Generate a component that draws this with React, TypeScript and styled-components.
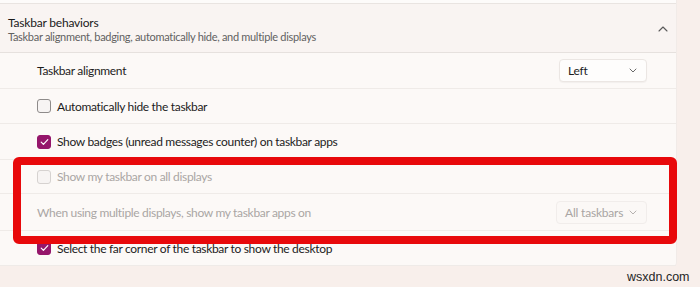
import styled, { createGlobalStyle } from "styled-components";

const GlobalStyle = createGlobalStyle`
  body {
    margin: 0;
    background: #f8efeb;
    font-family: Lato, "Noto Sans", sans-serif;
  }
`;

const ChevronDown = () => (
  <svg width="8" height="5" viewBox="0 0 8 5">
    <path d="M1 1l3 3 3-3" fill="none" stroke="currentColor" strokeWidth="1" strokeLinecap="round" strokeLinejoin="round" />
  </svg>
);

const ChevronUp = () => (
  <svg width="10" height="6" viewBox="0 0 10 6">
    <path d="M1 5l4-4 4 4" fill="none" stroke="currentColor" strokeWidth="1.1" strokeLinecap="round" strokeLinejoin="round" />
  </svg>
);

const CheckMark = () => (
  <svg width="9" height="8" viewBox="0 0 9 8">
    <path d="M1.2 4.2l2.2 2.2L7.8 1.6" fill="none" stroke="white" strokeWidth="1.2" strokeLinecap="round" strokeLinejoin="round" />
  </svg>
);

type Row = {
  label: string;
  h: number;
  check?: "on" | "off";
  disabled?: boolean;
  select?: string;
};

const rows: Row[] = [
  { label: "Taskbar alignment", h: 35, select: "Left" },
  { label: "Automatically hide the taskbar", h: 34, check: "off" },
  { label: "Show badges (unread messages counter) on taskbar apps", h: 35, check: "on" },
  { label: "Show my taskbar on all displays", h: 33, check: "off", disabled: true },
  { label: "When using multiple displays, show my taskbar apps on", h: 36, disabled: true, select: "All taskbars" },
  { label: "Select the far corner of the taskbar to show the desktop", h: 34, check: "on" },
];

export default function App() {
  return (
    <>
      <GlobalStyle />
      <Page>
        <Card>
          <PrevStrip />
          <Header>
            <HeaderText>
              <Title>Taskbar behaviors</Title>
              <Subtitle>Taskbar alignment, badging, automatically hide, and multiple displays</Subtitle>
            </HeaderText>
            <HeaderChevron>
              <ChevronUp />
            </HeaderChevron>
          </Header>
          {rows.map((r) => (
            <SettingRow key={r.label} $h={r.h}>
              <Label $disabled={r.disabled}>
                {r.check && (
                  <Box $checked={r.check === "on"} $disabled={r.disabled}>
                    {r.check === "on" && <CheckMark />}
                  </Box>
                )}
                {r.label}
              </Label>
              {r.select && (
                <Select $disabled={r.disabled} $w={r.select === "Left" ? 88 : 91}>
                  <span>{r.select}</span>
                  <ChevronDown />
                </Select>
              )}
            </SettingRow>
          ))}
        </Card>
        <Highlight />
        <Watermark>wsxdn.com</Watermark>
      </Page>
    </>
  );
}

const Page = styled.div`
  position: relative;
  width: 700px;
  height: 287px;
  overflow: hidden;
  background: #f8efeb;
`;

const Card = styled.div`
  width: 677px;
  background: #fcf9f7;
  border-bottom-right-radius: 4px;
  border-right: 1px solid #f1ebe8;
  box-sizing: border-box;
`;

const PrevStrip = styled.div`
  height: 3px;
  background: #fdfbfa;
  border-bottom: 1px solid #e9e4e1;
`;

const Header = styled.div`
  display: flex;
  align-items: center;
  justify-content: space-between;
  height: 48px;
  padding: 0 8px 0 8px;
  background: #f9f4f2;
  border-bottom: 1px solid #e6e1de;
`;

const HeaderText = styled.div`
  display: flex;
  flex-direction: column;
  margin-top: 3px;
`;

const Title = styled.div`
  font-size: 12px;
  letter-spacing: -0.2px;
  color: #1a1a1a;
  line-height: 14px;
`;

const Subtitle = styled.div`
  font-size: 11px;
  letter-spacing: -0.3px;
  color: #616161;
  line-height: 14px;
`;

const HeaderChevron = styled.div`
  display: flex;
  color: #5a5a5a;
  margin-top: 2px;
`;

const SettingRow = styled.div<{ $h: number }>`
  display: flex;
  align-items: center;
  justify-content: space-between;
  height: ${(p) => p.$h}px;
  padding: 0 29px 0 37px;
  border-bottom: 1px solid #efebe8;
`;

const Label = styled.div<{ $disabled?: boolean }>`
  display: flex;
  align-items: center;
  gap: 6px;
  font-size: 12px;
  letter-spacing: -0.32px;
  white-space: nowrap;
  color: ${(p) => (p.$disabled ? "#aaa6a4" : "#1c1c1c")};
`;

const Box = styled.div<{ $checked: boolean; $disabled?: boolean }>`
  display: flex;
  align-items: center;
  justify-content: center;
  width: 14px;
  height: 14px;
  box-sizing: border-box;
  border-radius: 3px;
  background: ${(p) => (p.$checked ? "#95166b" : "#f7f4f3")};
  border: 1px solid ${(p) => (p.$checked ? "#95166b" : p.$disabled ? "#d6d2d0" : "#8e8b8a")};
`;

const Select = styled.div<{ $disabled?: boolean; $w: number }>`
  display: flex;
  align-items: center;
  justify-content: space-between;
  width: ${(p) => p.$w}px;
  height: 23px;
  box-sizing: border-box;
  padding: 0 9px 0 8px;
  border-radius: 4px;
  font-size: 12px;
  letter-spacing: -0.2px;
  white-space: nowrap;
  background: ${(p) => (p.$disabled ? "#fbf8f6" : "#fefdfc")};
  border: 1px solid ${(p) => (p.$disabled ? "#f1edeb" : "#ebe6e3")};
  color: ${(p) => (p.$disabled ? "#a9a5a3" : "#1c1c1c")};
  box-shadow: ${(p) => (p.$disabled ? "none" : "0 1px 1px rgba(0,0,0,0.04)")};

  svg {
    color: ${(p) => (p.$disabled ? "#b5b1af" : "#6a6a6a")};
  }
`;

const Highlight = styled.div`
  position: absolute;
  left: 13px;
  top: 157px;
  width: 664px;
  height: 87px;
  box-sizing: border-box;
  border: 8px solid #e8090b;
  border-radius: 6px;
`;

const Watermark = styled.div`
  position: absolute;
  left: 627px;
  top: 270px;
  font-family: "Liberation Sans", Arial, sans-serif;
  font-size: 12.5px;
  color: #262626;
`;
